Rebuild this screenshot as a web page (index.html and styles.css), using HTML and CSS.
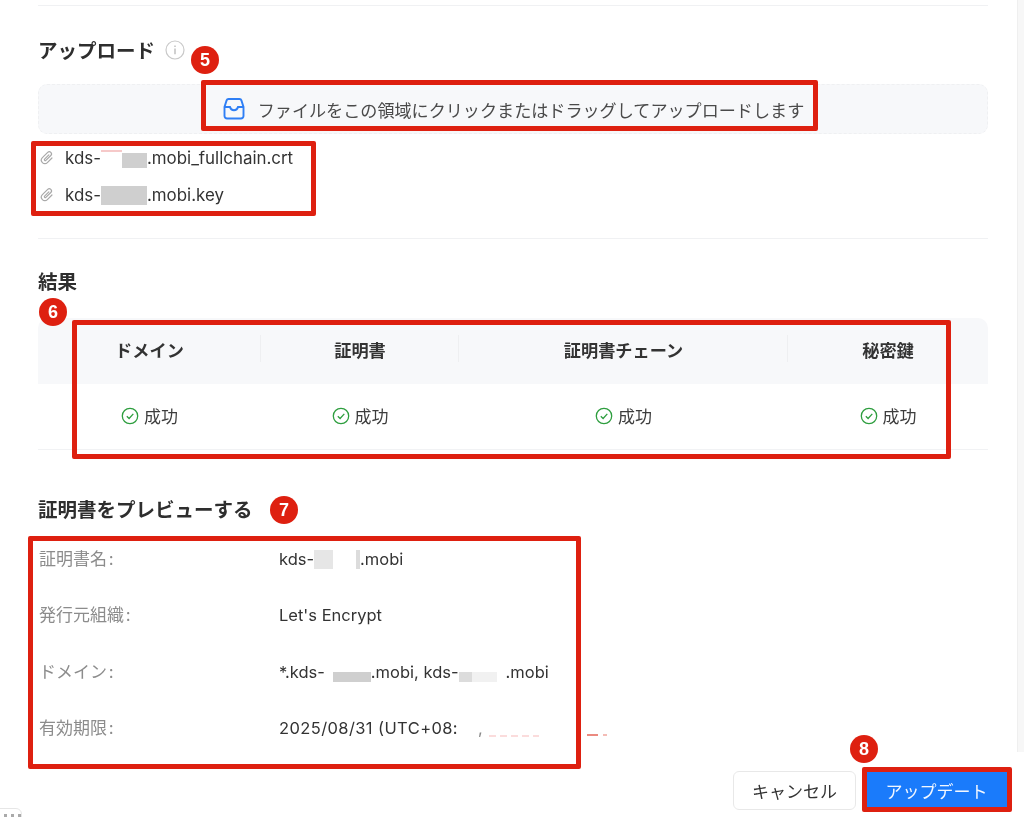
FILE: index.html
```html
<!DOCTYPE html>
<html lang="ja">
<head>
<meta charset="utf-8">
<title>証明書のアップロード</title>
<link rel="stylesheet" href="styles.css">
</head>
<body>
<div class="page">
  <main class="content">
    <hr class="rule">
    <div class="section-title upload-title">
      <span>アップロード</span>
      <svg class="info" viewBox="0 0 20 20" fill="none"><circle cx="10" cy="10" r="9" stroke="#c9c9c9" stroke-width="1.2"/><path d="M10 8.600v5.600M10 5.600v1.300" stroke="#bdbdbd" stroke-width="1.400"/></svg>
    </div>
    <div class="dropzone">
      <svg class="inbox" viewBox="0 0 24 24" fill="none"><path d="M6.500 2h11a2 2 0 0 1 1.900 1.400L21.500 10v9a2.500 2.500 0 0 1-2.500 2.500H5A2.500 2.500 0 0 1 2.500 19v-9l2.100-6.600A2 2 0 0 1 6.500 2Z" stroke="#2f7ff5" stroke-width="1.900"/><path d="M2.500 10H8c.5 2 2 3.200 4 3.200s3.500-1.200 4-3.200h5.500" stroke="#2f7ff5" stroke-width="1.900"/></svg>
      <span>ファイルをこの領域にクリックまたはドラッグしてアップロードします</span>
    </div>
    <ul class="files">
      <li class="file">
        <svg class="clip" viewBox="0 0 18 18" fill="none"><path transform="rotate(45 9 9)" d="M12.500 5.500V12a3.500 3.500 0 0 1-7 0V4.500a2.200 2.200 0 0 1 4.400 0v7a.9.9 0 0 1-1.800 0v-6" stroke="#a9a9a9" stroke-width="1.200" stroke-linecap="round"/></svg>
        <span>kds-<i class="mask mask-a"></i>.mobi_fullchain.crt</span>
      </li>
      <li class="file">
        <svg class="clip" viewBox="0 0 18 18" fill="none"><path transform="rotate(45 9 9)" d="M12.500 5.500V12a3.500 3.500 0 0 1-7 0V4.500a2.200 2.200 0 0 1 4.400 0v7a.9.9 0 0 1-1.800 0v-6" stroke="#a9a9a9" stroke-width="1.200" stroke-linecap="round"/></svg>
        <span>kds-<i class="mask mask-b"></i>.mobi.key</span>
      </li>
    </ul>
    <hr class="rule rule-files">
    <h2 class="section-title result-title">結果</h2>
    <div class="result-table">
      <div class="cell head">ドメイン</div>
      <div class="cell head">証明書</div>
      <div class="cell head">証明書チェーン</div>
      <div class="cell head">秘密鍵</div>
      <div class="cell body-cell"><svg class="ok" viewBox="0 0 18 18" fill="none"><circle cx="9" cy="9" r="7.700" stroke="#2e9e3f" stroke-width="1.300"/><path d="m5.800 9.200 2.300 2.300 4.200-4.600" stroke="#2e9e3f" stroke-width="1.300"/></svg>成功</div>
      <div class="cell body-cell"><svg class="ok" viewBox="0 0 18 18" fill="none"><circle cx="9" cy="9" r="7.700" stroke="#2e9e3f" stroke-width="1.300"/><path d="m5.800 9.200 2.300 2.300 4.200-4.600" stroke="#2e9e3f" stroke-width="1.300"/></svg>成功</div>
      <div class="cell body-cell"><svg class="ok" viewBox="0 0 18 18" fill="none"><circle cx="9" cy="9" r="7.700" stroke="#2e9e3f" stroke-width="1.300"/><path d="m5.800 9.200 2.300 2.300 4.200-4.600" stroke="#2e9e3f" stroke-width="1.300"/></svg>成功</div>
      <div class="cell body-cell"><svg class="ok" viewBox="0 0 18 18" fill="none"><circle cx="9" cy="9" r="7.700" stroke="#2e9e3f" stroke-width="1.300"/><path d="m5.800 9.200 2.300 2.300 4.200-4.600" stroke="#2e9e3f" stroke-width="1.300"/></svg>成功</div>
    </div>
    <h2 class="section-title preview-title">証明書をプレビューする</h2>
    <dl class="preview">
      <dt>証明書名 :</dt><dd>kds-<i class="mask mask-c"></i>.mobi</dd>
      <dt>発行元組織 :</dt><dd>Let's Encrypt</dd>
      <dt>ドメイン :</dt><dd>*.kds-<i class="mask mask-d"></i>.mobi, kds-<i class="mask mask-e"></i>.mobi</dd>
      <dt>有効期限 :</dt><dd class="date">2025/08/31 (UTC+08:<span class="tail">,</span></dd>
    </dl>
    <footer class="actions">
      <button class="btn btn-cancel" type="button">キャンセル</button>
      <button class="btn btn-primary" type="button">アップデート</button>
    </footer>
  </main>
  <div class="scroll-strip"></div>

  <div class="speck speck-dots"></div>
  <div class="speck speck-dash"></div>
  <div class="mark box-5"></div>
  <div class="mark box-files"></div>
  <div class="mark box-6"></div>
  <div class="mark box-7"></div>
  <div class="mark box-8"></div>
  <div class="badge badge-5">5</div>
  <div class="badge badge-6">6</div>
  <div class="badge badge-7">7</div>
  <div class="badge badge-8">8</div>
  <div class="handle"></div>
</div>
</body>
</html>
```
FILE: styles.css
```css
* { box-sizing: border-box; }
html, body { margin: 0; height: 100%; background: #fff; }
body {
  font-family: Inter, "Noto Sans CJK JP", sans-serif;
  color: #333;
  overflow: hidden;
}
.page {
  position: relative;
  display: flex;
  align-items: flex-start;
  width: 1024px;
  height: 817px;
  overflow: hidden;
  filter: blur(0.35px);
}
.content {
  flex: 1;
  padding: 5px 29px 0 38px;
  min-width: 0;
}
.scroll-strip {
  width: 7px;
  height: 752px;
  background: #f7f7f7;
  border-left: 1px solid #efefef;
}
.rule { margin: 0; border: 0; border-top: 1px solid #f0f1f3; }
.section-title {
  margin: 0;
  height: 24px;
  line-height: 24px;
  font-size: 19.5px;
  font-weight: 600;
  color: #2e2e2e;
}
.upload-title { display: flex; align-items: center; gap: 10px; margin-top: 33px; }
.info { width: 20px; height: 20px; margin-top: -2px; }
.dropzone {
  display: flex;
  align-items: center;
  justify-content: center;
  gap: 12px;
  height: 50px;
  margin-top: 21px;
  background: #f7f8fa;
  border: 1px dashed #eff0f2;
  border-radius: 9px;
  font-size: 17.1px;
  color: #4a4a4a;
}
.inbox { width: 24px; height: 24px; }
.files { list-style: none; margin: 5px 0 0; padding: 0; }
.file {
  display: flex;
  align-items: center;
  gap: 9px;
  height: 37px;
  font-size: 16.900px;
  color: #333;
}
.clip { width: 18px; height: 18px; flex: none; }
.mask { display: inline-block; height: 19px; vertical-align: -4px; }
.mask-a {
  width: 46px;
  background:
    linear-gradient(90deg, #f6c9c9 0 21px, transparent 21px) 0 1px / 100% 2px no-repeat,
    linear-gradient(90deg, transparent 0 21px, #cfcfcf 21px) 0 4px / 100% 15px no-repeat;
}
.mask-b { width: 46px; background: #cfcfcf; }
.mask-c { width: 46px; background: linear-gradient(90deg, #e6e6e6 0 19px, #fff 19px 42px, #dcdcdc 42px); }
.mask-d { width: 46px; background: linear-gradient(90deg, #fff 0 8px, #cfcfcf 8px) 0 9px / 100% 10px no-repeat; }
.mask-e { width: 47px; background: linear-gradient(90deg, #dcdcdc 0 13px, #f1f1f1 13px 38px, #fff 38px) 0 9px / 100% 10px no-repeat; }
.tail { margin-left: 20px; color: #888; }
.rule-files { margin-top: 25px; }
.result-title { margin-top: 31px; }
.result-table {
  display: grid;
  grid-template-columns: 223px 198px 329px 200px;
  margin-top: 24px;
  border-bottom: 1px solid #f1f2f4;
}
.cell {
  display: flex;
  align-items: center;
  justify-content: center;
  font-size: 17px;
}
.head {
  position: relative;
  height: 66px;
  padding-bottom: 4px;
  background: #f7f8fa;
  font-size: 17.200px;
  font-weight: 600;
  color: #333;
}
.head:first-child { border-top-left-radius: 10px; }
.head:nth-child(4) { border-top-right-radius: 10px; }
.head:not(:nth-child(4))::after {
  content: "";
  position: absolute;
  right: 0;
  top: 17px;
  height: 27px;
  border-right: 1px solid #eeeff1;
}
.body-cell { height: 65px; padding-bottom: 2px; gap: 5px; color: #3d3d3d; }
.ok { width: 18px; height: 18px; flex: none; }
.preview-title { margin-top: 48px; }
.preview {
  display: grid;
  grid-template-columns: 241px 1fr;
  grid-auto-rows: 56.3px;
  align-items: center;
  margin: 9px 0 0;
  font-size: 16.500px;
}
.preview dt {
  margin-bottom: 3px;
  padding-left: 1px;
  font-size: 17px;
  word-spacing: -3px;
  color: #8c8c8c;
}
.preview dd { margin: 0; color: #333; white-space: nowrap; }
.preview .date { letter-spacing: 0.4px; }
.actions {
  display: flex;
  justify-content: flex-end;
  gap: 9px;
  margin: 15px -20px 0 0;
}
.btn {
  height: 39px;
  border-radius: 4px;
  font: inherit;
  font-size: 17px;
  padding: 0;
}
.btn-cancel { width: 123px; border-radius: 6px; background: #fff; border: 1px solid #e8e8e8; color: #333; }
.btn-primary { width: 143px; background: #1a7bfb; border: 0; color: #f2f7ff; }

.speck { position: absolute; }
.speck-dots { left: 489px; top: 735px; width: 50px; height: 2px; background: repeating-linear-gradient(90deg, #fbdcdc 0 7px, transparent 7px 11px); }
.speck-dash { left: 587px; top: 734px; width: 20px; height: 2px; background: linear-gradient(90deg, #eb8a80 0 11px, transparent 11px 16px, #f4bcb6 16px); }
.mark { position: absolute; border: 5px solid #de2010; border-radius: 2px; }
.box-5 { left: 201px; top: 80px; width: 617px; height: 51px; }
.box-files { left: 31px; top: 141px; width: 285px; height: 75px; }
.box-6 { left: 72px; top: 320px; width: 879px; height: 139px; }
.box-7 { left: 28px; top: 536px; width: 553px; height: 233px; }
.box-8 { left: 862px; top: 767px; width: 150px; height: 45px; }
.badge {
  position: absolute;
  width: 28px;
  height: 28px;
  border-radius: 50%;
  background: #de2010;
  color: #fff;
  font: 700 18px/28px "Liberation Sans", sans-serif;
  text-align: center;
}
.badge-5 { left: 191px; top: 46px; }
.badge-6 { left: 39px; top: 298px; }
.badge-7 { left: 270px; top: 496px; }
.badge-8 { left: 850px; top: 735px; }
.handle {
  position: absolute;
  left: -6px;
  top: 808px;
  width: 28px;
  height: 20px;
  border: 1px solid #e6e6e6;
  border-radius: 6px;
  background: radial-gradient(circle, #aaa 1.500px, transparent 2px) 7px 3px / 7px 7px repeat-x #fff;
}
```
